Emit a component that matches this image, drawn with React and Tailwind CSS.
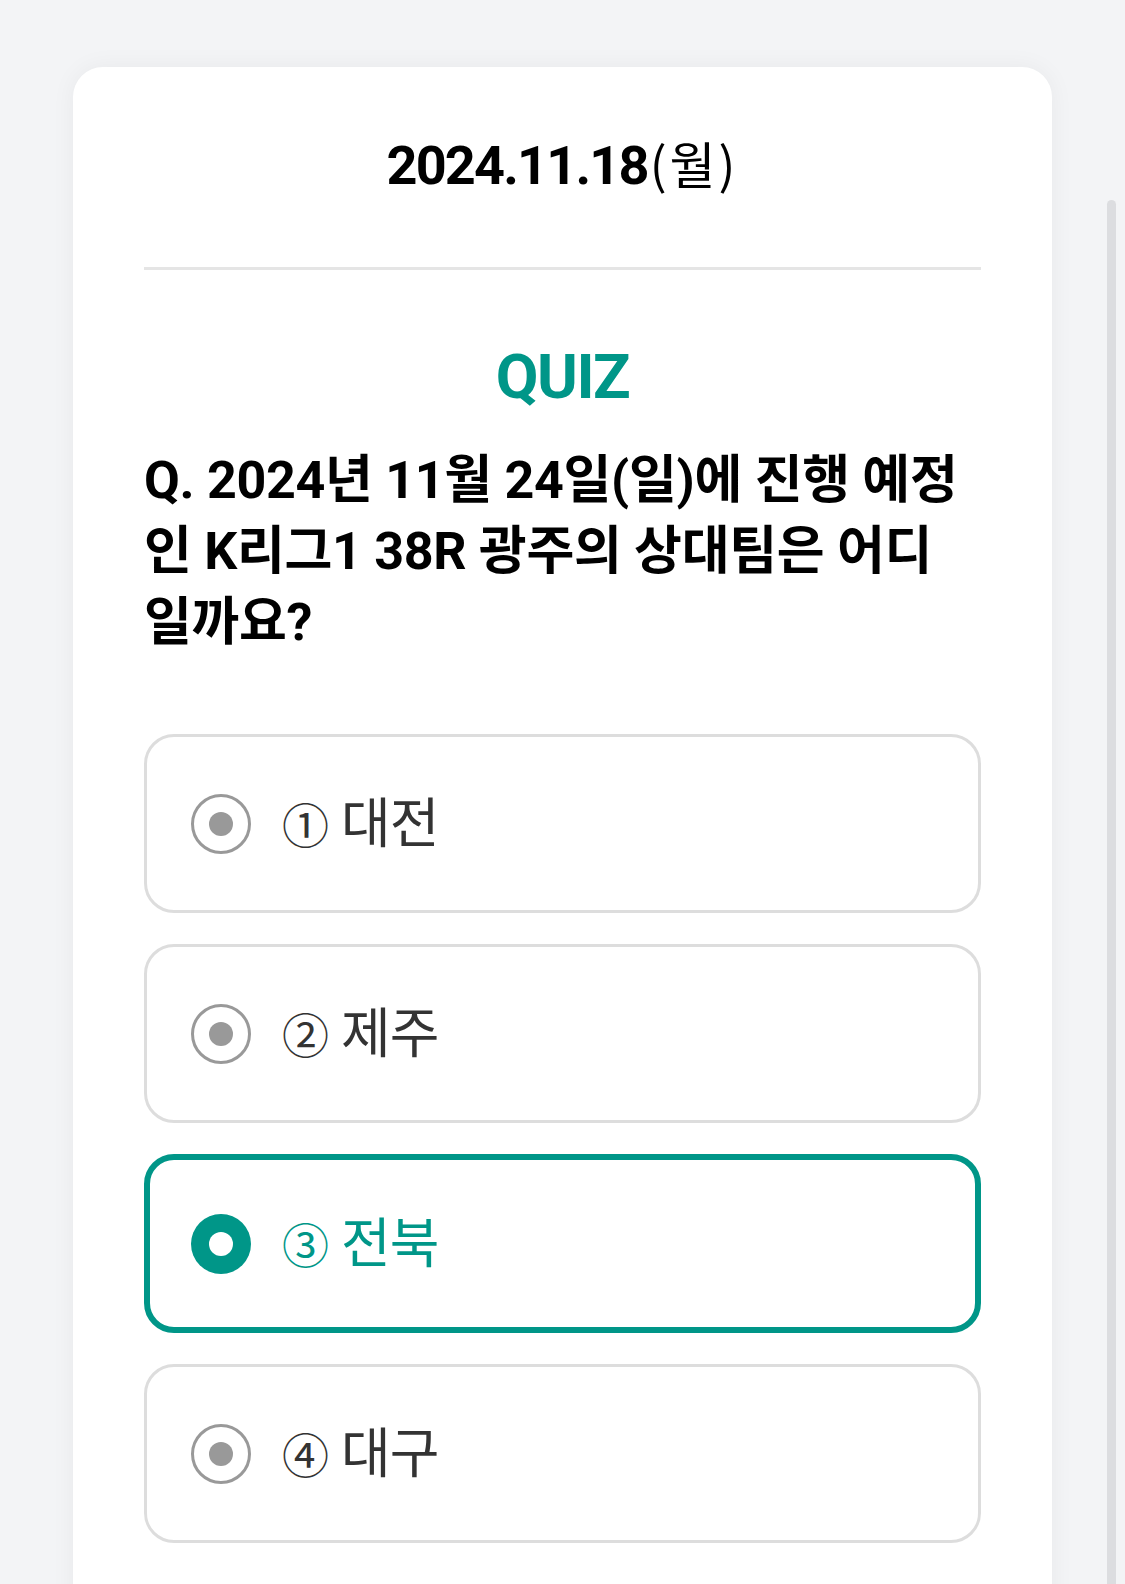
import React from 'react'

const FONT = { fontFamily: "Roboto, 'Noto Sans CJK KR', sans-serif" }
const KR = { fontFamily: "'Noto Sans CJK KR', Roboto, sans-serif" }

const options = [
  { id: 1, num: '①', label: '대전' },
  { id: 2, num: '②', label: '제주' },
  { id: 3, num: '③', label: '전북' },
  { id: 4, num: '④', label: '대구' },
]

function Radio({ checked }) {
  if (checked) {
    return (
      <span className="w-[60px] h-[60px] shrink-0 rounded-full bg-[#009688] flex items-center justify-center">
        <span className="w-[24px] h-[24px] rounded-full bg-white" />
      </span>
    )
  }
  return (
    <span className="w-[60px] h-[60px] shrink-0 rounded-full border-[3px] border-[#999999] flex items-center justify-center">
      <span className="w-[24px] h-[24px] rounded-full bg-[#999999]" />
    </span>
  )
}

function Option({ option, selected }) {
  return (
    <div
      className={`h-[179px] rounded-[30px] bg-white flex items-center gap-[31px] ${
        selected ? 'border-[6px] border-[#009688] pl-[41px]' : 'border-[3px] border-[#dddddd] pl-[44px]'
      }`}
    >
      <Radio checked={selected} />
      <span
        className={`mb-[8px] leading-none ${selected ? 'text-[#009688]' : 'text-[#333333]'}`}
        style={KR}
      >
        <span className="text-[47px]">{option.num}</span>
        <span className="text-[54px] tracking-[-1px] ml-[12px]">{option.label}</span>
      </span>
    </div>
  )
}

export default function App() {
  const selected = 3

  return (
    <div className="h-[1584px] overflow-hidden bg-[#f3f4f6] flex" style={FONT}>
      {/* 카드 */}
      <div className="ml-[73px] mt-[67px] w-[979px] min-h-[1600px] shrink-0 rounded-t-[30px] bg-white px-[71px] pt-[63px] shadow-[0_0_24px_rgba(0,0,0,0.05)]">
        <div className="text-center text-[54px] leading-[64px] font-bold tracking-[-1.8px] text-black">
          2024.11.18
          <span className="text-[50px] font-normal tracking-[3px] ml-[2px]" style={KR}>(월)</span>
        </div>

        <div className="mt-[69px] h-[3px] bg-[#e5e5e5]" />

        <div className="mt-[71px] text-center text-[62px] leading-[72px] font-bold tracking-[-1.5px] text-[#009688]">
          QUIZ
        </div>

        <p className="mt-[32px] text-[52px] leading-[71px] font-bold tracking-[-0.3px] text-black">
          Q. 2024년 11월 24일(일)에 진행 예정<br />
          인 K리그1 38R 광주의 상대팀은 어디<br />
          일까요?
        </p>

        <div className="mt-[76px] flex flex-col gap-[31px]">
          {options.map(o => (
            <Option key={o.id} option={o} selected={o.id === selected} />
          ))}
        </div>
      </div>

      {/* 스크롤바 */}
      <div className="ml-[55px] mt-[200px] w-[9px] h-[1500px] shrink-0 rounded-t-full bg-[#dcdde0]" />
    </div>
  )
}
